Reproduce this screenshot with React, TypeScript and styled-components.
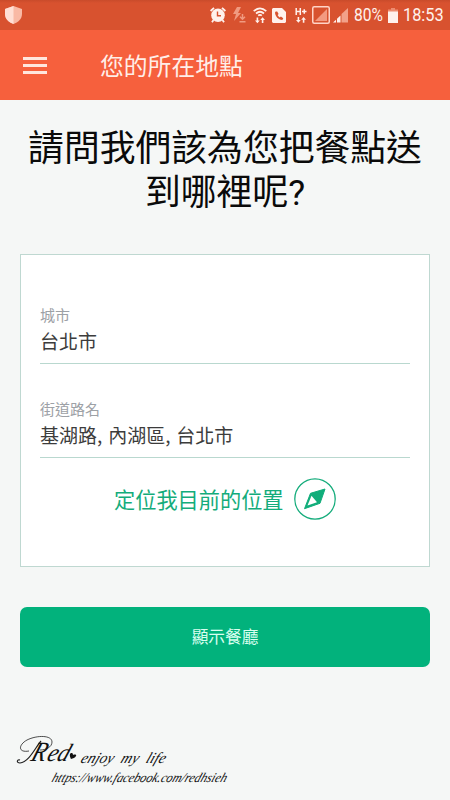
import React from "react";
import styled, { createGlobalStyle } from "styled-components";

const GlobalStyle = createGlobalStyle`
  * { box-sizing: border-box; }
  body {
    margin: 0;
    background: #f5f7f6;
    font-family: Roboto, "Noto Sans CJK TC", sans-serif;
  }
`;

const Screen = styled.div`
  width: 450px;
  height: 800px;
  display: flex;
  flex-direction: column;
  background: #f5f7f6;
  overflow: hidden;
`;

const StatusBar = styled.div`
  flex: none;
  height: 30px;
  display: flex;
  align-items: center;
  background: linear-gradient(#c94b2b 0, #d8522f 3px, #d8522f 100%);
  color: #fff1ec;
`;

const StatusIcon = styled.svg<{ $gap: number }>`
  flex: none;
  display: block;
  margin-left: ${(p) => p.$gap}px;
  overflow: visible;
`;

const StatusText = styled.div<{ $gap: number; $width: number; $squeeze: number }>`
  flex: none;
  width: ${(p) => p.$width}px;
  margin-left: ${(p) => p.$gap}px;
  font: 400 19px/30px Roboto, sans-serif;
  white-space: nowrap;
  transform: scaleX(${(p) => p.$squeeze});
  transform-origin: 0 50%;
`;

const AppBar = styled.header`
  flex: none;
  height: 70px;
  display: flex;
  align-items: center;
  padding-left: 23px;
  background: #f6603d;
`;

const MenuButton = styled.div`
  width: 24px;
  height: 17px;
  display: flex;
  flex-direction: column;
  justify-content: space-between;
`;

const MenuLine = styled.span`
  height: 3px;
  background: #ffe6dd;
`;

const AppTitle = styled.div`
  margin-left: 53px;
  font: 400 23.8px/34px "Noto Sans CJK TC", sans-serif;
  color: #ffeee8;
`;

const Question = styled.h1`
  flex: none;
  height: 154px;
  margin: 0;
  padding-top: 27px;
  text-align: center;
  font: 400 35.8px/44px Roboto, "Noto Sans CJK TC", sans-serif;
  color: #0a0a0a;
  white-space: nowrap;
`;

const Card = styled.section`
  flex: none;
  height: 313px;
  margin: 0 20px;
  padding: 49px 19px 0;
  border: 1px solid #bfd8d1;
  background: #fff;
`;

const Field = styled.div`
  height: 60px;
  margin-bottom: 34px;
  border-bottom: 1px solid #b9d8cf;
`;

const Label = styled.div`
  font: 400 15px/22px "Noto Sans CJK TC", sans-serif;
  color: #9da1a6;
`;

const Value = styled.div`
  font: 400 19px/30px "Noto Sans CJK TC", sans-serif;
  color: #3c3c3c;
  word-spacing: 1.6px;
`;

const LocateRow = styled.div`
  display: flex;
  align-items: center;
  margin-top: -14px;
  padding-left: 74px;
  height: 42px;
`;

const LocateText = styled.div`
  width: 180px;
  font: 400 21.2px/32px "Noto Sans CJK TC", sans-serif;
  color: #14ac7b;
`;

const SubmitButton = styled.button`
  flex: none;
  height: 60px;
  margin: 39.5px 20px 0;
  padding: 0;
  border: 0;
  border-radius: 7px;
  background: #02b27c;
  color: #d9fff0;
  font: 400 16.7px/59px "Noto Sans CJK TC", sans-serif;
`;

const Signature = styled.footer`
  position: relative;
  flex: none;
  height: 64px;
  margin: 66px 0 0 14px;
  color: #111;
  font-family: "Liberation Serif", serif;
`;

const Flourish = styled.svg`
  position: absolute;
  left: 0;
  top: 0;
  overflow: visible;
`;

const Ink = styled.span<{ $x: number; $y: number; $size: number; $sx: number }>`
  position: absolute;
  left: ${(p) => p.$x}px;
  top: ${(p) => p.$y}px;
  font-size: ${(p) => p.$size}px;
  font-style: italic;
  line-height: 1;
  white-space: pre;
  transform: scaleX(${(p) => p.$sx}) skewX(-22deg);
  transform-origin: 0 80%;
`;

const Shield = () => (
  <StatusIcon $gap={5} width="17" height="18" viewBox="0 0 17 18">
    <path d="M8.5 0 17 3v5c0 5-4 8.500-8.500 10C4 16.500 0 13 0 8V3z" fill="#f9b9a5" />
    <path d="M8.500 0 0 3v5c0 5 4 8.500 8.500 10z" fill="#ffdfd5" />
  </StatusIcon>
);

const Alarm = () => (
  <StatusIcon $gap={188} width="16" height="16" viewBox="0 0 16 16">
    <circle cx="8" cy="8.200" r="6.800" fill="currentColor" />
    <path d="M.6 4 4 .9M12 .9 15.400 4M3.500 13 2 15.300M12.500 13l1.500 2.300" stroke="currentColor" strokeWidth="1.800" />
    <path d="M7.500 4.500v4.200h3.500" fill="none" stroke="#d8522f" strokeWidth="1.400" />
  </StatusIcon>
);

const Bolt = () => (
  <StatusIcon $gap={6} width="15" height="16" viewBox="0 0 15 16" color="#f09a80">
    <path d="M5 0 1 7h3L2 14l7-8H6l3-6z" fill="currentColor" />
    <path d="M10.500 7v5M8 9.800l2.500 2.500 2.500-2.500M7.500 14.800h6" fill="none" stroke="currentColor" strokeWidth="1.500" />
  </StatusIcon>
);

const Wifi = () => (
  <StatusIcon $gap={6} width="14" height="16" viewBox="0 0 14 16">
    <path d="M.7 4.200Q7-1.500 13.300 4.200M3 6.500q4-3.500 8 0M5.200 8.700q1.800-1.500 3.600 0" fill="none" stroke="currentColor" strokeWidth="1.700" />
    <path d="m2 13.500 2.400 2.700 2.400-2.700H5.200v-3H3.600v3zM7.200 13l2.400-2.700L12 13h-1.600v3H8.800v-3z" fill="currentColor" />
  </StatusIcon>
);

const CallCard = () => (
  <StatusIcon $gap={5} width="14" height="15" viewBox="0 0 14 15">
    <path d="M1 0h9l4 4v10l-1 1H1l-1-1V1z" fill="currentColor" />
    <path d="M3 4.500c.2 4 3.300 7.300 7.300 7.500l1-1.700-2.400-1.700-1.200.9C6.600 8.800 6 8 5.600 7.100l1-1L5.200 3.500 3.700 3.400z" fill="#d8522f" />
  </StatusIcon>
);

const DataLink = () => (
  <StatusIcon $gap={9} width="13" height="16" viewBox="0 0 13 16">
    <path d="M1.200 1v7M5.300 1v7M1 4.500h4.500M7 4.500h4.500M9.250 2.200v4.600" fill="none" stroke="currentColor" strokeWidth="1.500" />
    <path d="m1 13 2.400 2.700L5.800 13H4.200v-3H2.600v3zM6.200 12.700 8.600 10l2.400 2.700H9.400v3H7.800v-3z" fill="currentColor" />
  </StatusIcon>
);

const SimSignal = () => (
  <StatusIcon $gap={4} width="18" height="18" viewBox="0 0 18 18">
    <rect x=".75" y=".75" width="16.500" height="16.500" rx="1.500" fill="none" stroke="#ffd4c7" strokeWidth="1.500" />
    <path d="M15 3v12H3z" fill="#f39a81" />
  </StatusIcon>
);

const Signal = () => (
  <StatusIcon $gap={3} width="15" height="15" viewBox="0 0 15 15">
    <path d="M15 0v14.500H8.500V6z" fill="#f2a18a" />
    <path d="M0 14.500 3 11.800v2.700zM4 14.500v-3.700L7.500 7.500v7z" fill="currentColor" />
  </StatusIcon>
);

const Battery = () => (
  <StatusIcon $gap={3} width="10" height="15" viewBox="0 0 10 15">
    <path d="M3 0h4v1.500h3V4H0V1.500h3z" fill="#ed8c70" />
    <path d="M0 3.500h10V15H0z" fill="currentColor" />
  </StatusIcon>
);

const Compass = () => (
  <svg width="42" height="42" viewBox="0 0 42 42">
    <circle cx="21" cy="21" r="20.200" fill="none" stroke="#14ac7b" strokeWidth="1.300" />
    <path d="M31 11 16.500 15.300 10.500 30.700 26 25.300z" fill="#10ad7a" stroke="#10ad7a" strokeLinejoin="round" />
    <path d="m17.500 17.700 5.500 6.600-9.500 3.300z" fill="#fff" />
  </svg>
);

const fields = [
  { label: "城市", value: "台北市" },
  { label: "街道路名", value: "基湖路, 內湖區, 台北市" },
];

export default function App() {
  return (
    <Screen>
      <GlobalStyle />
      <StatusBar>
        <Shield />
        <Alarm />
        <Bolt />
        <Wifi />
        <CallCard />
        <DataLink />
        <SimSignal />
        <Signal />
        <StatusText $gap={6} $width={31} $squeeze={0.82}>80%</StatusText>
        <Battery />
        <StatusText $gap={5} $width={41} $squeeze={0.86}>18:53</StatusText>
      </StatusBar>
      <AppBar>
        <MenuButton>
          <MenuLine />
          <MenuLine />
          <MenuLine />
        </MenuButton>
        <AppTitle>您的所在地點</AppTitle>
      </AppBar>
      <Question>
        請問我們該為您把餐點送
        <br />
        到哪裡呢?
      </Question>
      <Card>
        {fields.map((f) => (
          <Field key={f.label}>
            <Label>{f.label}</Label>
            <Value>{f.value}</Value>
          </Field>
        ))}
        <LocateRow>
          <LocateText>定位我目前的位置</LocateText>
          <Compass />
        </LocateRow>
      </Card>
      <SubmitButton>顯示餐廳</SubmitButton>
      <Signature>
        <Flourish width="60" height="40" viewBox="0 0 60 40" fill="none" stroke="#222">
          <path d="M15 18C4 20 4 12 13 7 23 2 38 2 38 9c0 5-6 8-12 8" strokeWidth=".8" />
          <path d="M27 8C21 15 15 29 6 30c-4 0-3-4 0-3" strokeWidth="1.200" />
        </Flourish>
        <Ink $x={16} $y={5} $size={28} $sx={0.85}>R</Ink>
        <Ink $x={32} $y={7} $size={25} $sx={0.92}>ed</Ink>
        <Flourish width="64" height="40" viewBox="0 0 64 40" fill="#111">
          <path d="M57 26c-1-2-2-5 0-6 1 0 2 0 2 2 2-1 4 0 3 1-1 2-3 2-5 3z" />
        </Flourish>
        <Ink $x={66} $y={17} $size={15.5} $sx={0.97}>enjoy  my  life</Ink>
        <Ink $x={37} $y={38} $size={13.5} $sx={0.91}>https://www.facebook.com/redhsieh</Ink>
      </Signature>
    </Screen>
  );
}
